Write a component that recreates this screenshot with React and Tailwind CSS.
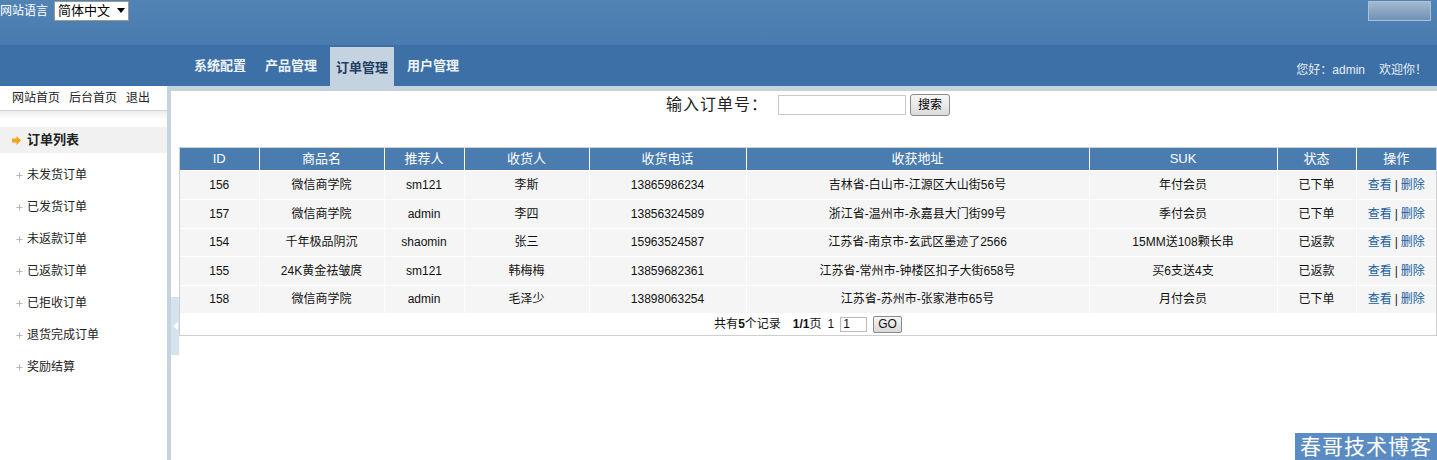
import React from 'react'

const rows = [
  ['156', '微信商学院', 'sm121', '李斯', '13865986234', '吉林省-白山市-江源区大山街56号', '年付会员', '已下单'],
  ['157', '微信商学院', 'admin', '李四', '13856324589', '浙江省-温州市-永嘉县大门街99号', '季付会员', '已下单'],
  ['154', '千年极品阴沉', 'shaomin', '张三', '15963524587', '江苏省-南京市-玄武区墨迹了2566', '15MM送108颗长串', '已返款'],
  ['155', '24K黄金祛皱庹', 'sm121', '韩梅梅', '13859682361', '江苏省-常州市-钟楼区扣子大街658号', '买6支送4支', '已返款'],
  ['158', '微信商学院', 'admin', '毛泽少', '13898063254', '江苏省-苏州市-张家港市65号', '月付会员', '已下单'],
]

const rowHeights = ['h-[29px]', 'h-[29px]', 'h-[28px]', 'h-[29px]', 'h-[28px]']

const heads = [
  ['ID', 'w-[79px]'],
  ['商品名', 'w-[125px]'],
  ['推荐人', 'w-[80px]'],
  ['收货人', 'w-[125px]'],
  ['收货电话', 'w-[157px]'],
  ['收获地址', 'w-[343px]'],
  ['SUK', 'w-[188px]'],
  ['状态', 'w-[79px]'],
  ['操作', 'w-[80px]'],
]

const menu = ['未发货订单', '已发货订单', '未返款订单', '已返款订单', '已拒收订单', '退货完成订单', '奖励结算']

const tabs = ['系统配置', '产品管理', '订单管理', '用户管理']

function PlusArrow() {
  return (
    <svg width="7" height="7" viewBox="0 0 7 7" className="shrink-0">
      <path d="M3.5 0.5v6M0.5 3.5h6" stroke="#b5b5b5" strokeWidth="1" />
    </svg>
  )
}

export default function App() {
  return (
    <div className="w-[1437px] h-[460px] overflow-hidden bg-white flex flex-col relative font-['Liberation_Sans','Noto_Sans_CJK_SC',sans-serif] text-[#222]">
      {/* header */}
      <header className="h-[86px] flex flex-col shrink-0">
        <div className="h-[45px] flex justify-between bg-gradient-to-b from-[#5183b5] to-[#4a7bae]">
          <div className="flex items-center h-[21px] gap-[6px] text-[12px] text-white">
            <span>网站语言</span>
            <div className="w-[75px] h-[20px] bg-white border border-[#999] flex items-center justify-between px-[3px] text-[13px] text-black">
              <span>简体中文</span>
              <svg width="8" height="5" viewBox="0 0 8 5"><path d="M0 0h8L4 5z" fill="#000" /></svg>
            </div>
          </div>
          <div className="mt-[1px] mr-[6px] w-[63px] h-[20px] border border-[#a9c0d8] bg-gradient-to-b from-[#a4b9cf] via-[#8aa5c2] to-[#6f92b7]" />
        </div>
        <div className="h-[41px] bg-[#3d70a6] flex items-end justify-between">
          <nav className="flex items-end h-full ml-[188px] gap-[7px]">
            {tabs.map((t) => (
              <div
                key={t}
                className={
                  t === '订单管理'
                    ? 'w-[64px] h-[39px] bg-[#c5d3e1] flex items-center justify-center pt-[2px] text-[13px] font-bold text-[#1e3d60]'
                    : 'w-[64px] h-[39px] flex items-center justify-center pb-[2px] text-[13px] font-bold text-[#eef3f8]'
                }
              >
                {t}
              </div>
            ))}
          </nav>
          <div className="mr-[10px] mb-[7px] text-[12px] text-[#e6eef6] flex gap-[14px]">
            <span>您好：admin</span>
            <span>欢迎你！</span>
          </div>
        </div>
      </header>

      {/* body */}
      <div className="flex-1 flex min-h-0">
        <aside className="w-[167px] shrink-0 flex flex-col">
          <div className="h-[25px] border-b border-[#d4d4d4] flex items-center pl-[12px] gap-[9px] text-[12px] text-[#222]">
            <span>网站首页</span>
            <span>后台首页</span>
            <span>退出</span>
          </div>
          <div className="h-[8px] bg-gradient-to-b from-[#ececec] to-white" />
          <div className="mt-[8px] h-[26px] bg-[#f1f1f1] flex items-center pl-[12px] gap-[6px] text-[13px] font-bold text-[#222]">
            <svg width="9" height="9" viewBox="0 0 9 9" className="shrink-0">
              <path d="M0 2.5h4.5V0L9 4.5 4.5 9V6.5H0z" fill="#f5a21b" />
            </svg>
            <span>订单列表</span>
          </div>
          <div className="mt-[6px] flex flex-col">
            {menu.map((m) => (
              <div key={m} className="h-[32px] flex items-center pl-[16px] gap-[4px] text-[12px] text-[#222]">
                <PlusArrow />
                <span>{m}</span>
              </div>
            ))}
          </div>
        </aside>
        <div className="w-[4px] shrink-0 bg-[#c5d2df]" />
        <main className="flex-1 border-t-[5px] border-[#c5d2df] relative pl-[8px] flex flex-col">
          <div className="absolute left-0 top-[206px] w-[8px] h-[58px] bg-[#d5e3ef] flex items-center justify-center">
            <svg width="5" height="8" viewBox="0 0 5 8"><path d="M5 0v8L0 4z" fill="#fff" /></svg>
          </div>

          <div className="h-[28px] flex items-center justify-center gap-[10px]">
            <span className="text-[16px] text-[#222] tracking-[1px]">输入订单号：</span>
            <div className="flex items-center gap-[4px]">
              <div className="w-[128px] h-[20px] border border-[#c9c9c9] bg-white" />
              <button className="w-[40px] h-[22px] border border-[#8a8a8a] rounded-[3px] bg-gradient-to-b from-[#f6f6f6] to-[#dcdcdc] text-[12px] text-black">搜索</button>
            </div>
          </div>

          <div className="mt-[28px] border border-[#cfcfcf] w-[1258px]">
            <table className="table-fixed border-collapse w-full text-[12px]">
              <thead>
                <tr className="h-[22px] bg-[#4a7cb0] text-white">
                  {heads.map(([h, w]) => (
                    <th key={h} className={`${w} font-normal text-[13px] border-x border-white first:border-l-0 last:border-r-0`}>
                      {h}
                    </th>
                  ))}
                </tr>
              </thead>
              <tbody>
                {rows.map((r, i) => (
                  <tr key={r[0]} className={`${rowHeights[i]} bg-[#f5f5f5]`}>
                    {r.map((c, j) => (
                      <td key={j} className="text-center border border-white first:border-l-0 text-[#111]">
                        {c}
                      </td>
                    ))}
                    <td className="text-center border border-white border-r-0">
                      <span className="text-[#2060a0]">查看</span>
                      <span className="mx-[3px] text-[#222]">|</span>
                      <span className="text-[#2060a0]">删除</span>
                    </td>
                  </tr>
                ))}
                <tr className="h-[22px] bg-white">
                  <td colSpan={9} className="text-center">
                    <div className="flex items-center justify-center gap-[6px] text-[12px] text-[#111]">
                      <span>共有<b>5</b>个记录</span>
                      <span className="ml-[6px]"><b>1/1</b>页</span>
                      <span>1</span>
                      <div className="w-[27px] h-[15px] border border-[#bbb] text-left pl-[2px] leading-[13px]">1</div>
                      <button className="h-[17px] px-[4px] border border-[#8a8a8a] rounded-[2px] bg-gradient-to-b from-[#f6f6f6] to-[#d8d8d8] text-[12px] leading-[15px]">GO</button>
                    </div>
                  </td>
                </tr>
              </tbody>
            </table>
          </div>
        </main>
      </div>

      <div className="absolute right-0 bottom-0 w-[142px] h-[27px] bg-[#5a8bc3] flex items-center justify-center text-white text-[21px] tracking-[1px]">
        春哥技术博客
      </div>
    </div>
  )
}
